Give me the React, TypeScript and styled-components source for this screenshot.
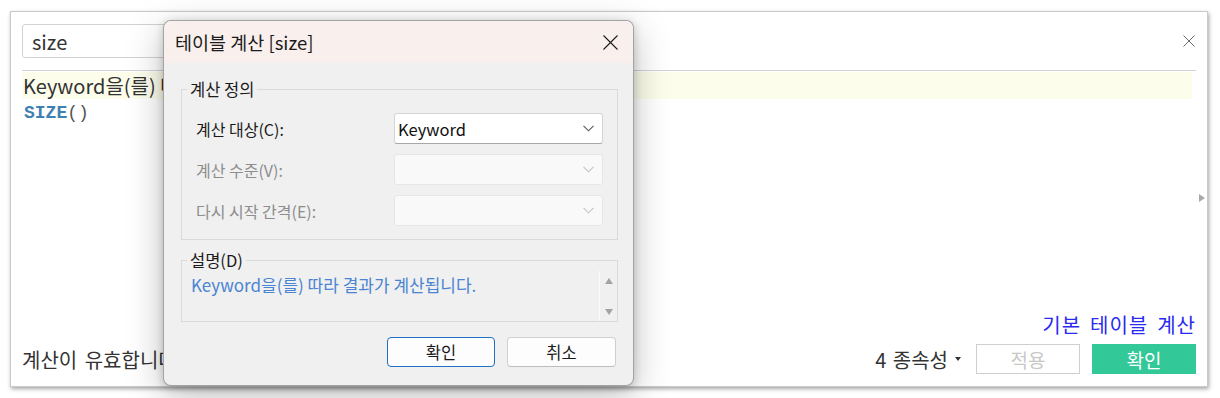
import React from "react";
import styled, { createGlobalStyle } from "styled-components";

const Global = createGlobalStyle`
  html, body { margin: 0; padding: 0; background: #ffffff; }
  body { font-family: "Noto Sans CJK KR", "Noto Sans", sans-serif; color: #333; }
  * { box-sizing: border-box; }
`;

const Stage = styled.div`
  position: relative;
  width: 1220px;
  height: 398px;
  padding: 11px 0 0 10px;
  overflow: hidden;
`;

const Panel = styled.section`
  position: relative;
  width: 1198px;
  height: 376px;
  background: #fff;
  border: 1px solid #c9c9c9;
  box-shadow: 1px 2px 4px rgba(0, 0, 0, 0.35);
  padding: 12px 11px 12px 11px;
  display: flex;
  flex-direction: column;
`;

const SearchRow = styled.div`
  height: 34px;
  display: flex;
  align-items: center;
  justify-content: space-between;
`;

const SearchBox = styled.div`
  width: 560px;
  height: 34px;
  border: 1px solid #d2d2d2;
  border-radius: 3px;
  padding-left: 9px;
  display: flex;
  align-items: center;
  font-size: 20px;
  color: #333;
`;

const PanelClose = styled.span`
  width: 12px;
  height: 12px;
  margin-right: 1px;
  display: flex;
`;

const Divider = styled.div`
  margin-top: 12px;
  height: 1px;
  background: #d3d3d3;
`;

const Highlight = styled.div`
  margin-top: 1px;
  margin-right: 4px;
  height: 27px;
  background: #fdfdec;
  font-size: 20px;
  line-height: 27px;
  color: #333;
  padding-left: 1px;
  white-space: nowrap;
`;

const Code = styled.div`
  margin-top: 4px;
  height: 20px;
  line-height: 20px;
  padding-left: 2px;
  font-family: "Liberation Mono", "DejaVu Sans Mono", monospace;
  font-size: 18px;
  color: #444;
`;

const Fn = styled.span`
  font-weight: bold;
  color: #3f80b3;
`;

const Paren = styled.span`
  color: #555;
`;

const Spacer = styled.div`
  flex: 1;
`;

const LinkRow = styled.div`
  text-align: right;
  margin-bottom: 6px;
  line-height: 24px;
`;

const Link = styled.a`
  font-size: 20px;
  letter-spacing: 1px;
  word-spacing: 3.5px;
  color: #2a2af0;
  text-decoration: none;
`;

const BottomRow = styled.div`
  height: 30px;
  display: flex;
  align-items: center;
  justify-content: space-between;
`;

const Status = styled.span`
  font-size: 20px;
  word-spacing: 3px;
  color: #333;
`;

const Actions = styled.div`
  display: flex;
  align-items: center;
`;

const Deps = styled.span`
  font-size: 20px;
  color: #333;
  display: flex;
  align-items: center;
  margin-right: 15px;
  word-spacing: 2px;
`;

const Caret = styled.span`
  margin-left: 7px;
  width: 0;
  height: 0;
  border-left: 3.5px solid transparent;
  border-right: 3.5px solid transparent;
  border-top: 4px solid #333;
`;

const PanelButton = styled.button<{ $primary?: boolean }>`
  width: 104px;
  height: 30px;
  margin-left: ${(p) => (p.$primary ? "12px" : "0")};
  border: 1px solid ${(p) => (p.$primary ? "#33c898" : "#cfcfcf")};
  background: ${(p) => (p.$primary ? "#33c898" : "#fff")};
  color: ${(p) => (p.$primary ? "#fff" : "#c8c8c8")};
  font-family: inherit;
  font-size: 19px;
  padding: 0;
  border-radius: 0;
`;

const Handle = styled.span`
  position: absolute;
  right: 2px;
  top: 182px;
  width: 0;
  height: 0;
  border-top: 4.5px solid transparent;
  border-bottom: 4.5px solid transparent;
  border-left: 6px solid #a9a9a9;
`;

/* ---------- dialog ---------- */

const Dialog = styled.div`
  position: absolute;
  left: 163px;
  top: 20px;
  width: 471px;
  height: 366px;
  border: 1px solid rgba(0, 0, 0, 0.32);
  border-radius: 8px;
  background: #f0f0f0;
  overflow: hidden;
  display: flex;
  flex-direction: column;
  box-shadow: 0 10px 36px rgba(0, 0, 0, 0.26), 0 2px 8px rgba(0, 0, 0, 0.18);
  color: #1a1a1a;
`;

const TitleBar = styled.div`
  height: 42px;
  flex: none;
  background: #f9efed;
  display: flex;
  align-items: center;
  justify-content: space-between;
  padding-left: 11px;
`;

const Title = styled.span`
  font-size: 18.5px;
  color: #1b1b1b;
`;

const TitleClose = styled.span`
  width: 46px;
  height: 42px;
  display: flex;
  align-items: center;
  justify-content: center;
`;

const DialogBody = styled.div`
  flex: 1;
  padding: 16px 15px 18px 17px;
  display: flex;
  flex-direction: column;
`;

const Group = styled.fieldset<{ $gap?: number }>`
  margin: ${(p) => p.$gap ?? 0}px 0 0 0;
  border: 1px solid #dadada;
  min-width: 0;
`;

const DefGroup = styled(Group)`
  padding: 14px 14px 13px 13px;
`;

const DescGroup = styled(Group)`
  padding: 0 0 0 9px;
`;

const Legend = styled.legend<{ $lh: number; $shift: number }>`
  margin-left: ${(p) => p.$shift}px;
  padding: 0 3px;
  font-size: 16.5px;
  line-height: ${(p) => p.$lh}px;
  color: #1a1a1a;
`;

const FormGrid = styled.div`
  display: grid;
  grid-template-columns: 1fr 209px;
  row-gap: 10px;
  align-items: center;
`;

const Label = styled.span<{ $disabled?: boolean }>`
  font-size: 16px;
  padding-left: 1px;
  color: ${(p) => (p.$disabled ? "#8d8d8d" : "#1a1a1a")};
`;

const Combo = styled.div<{ $disabled?: boolean }>`
  height: 31px;
  border: 1px solid ${(p) => (p.$disabled ? "#e6e6e6" : "#d4d4d4")};
  border-bottom-color: ${(p) => (p.$disabled ? "#e6e6e6" : "#a8a8a8")};
  border-radius: 3px;
  background: ${(p) => (p.$disabled ? "#f9f9f9" : "#ffffff")};
  display: flex;
  align-items: center;
  justify-content: space-between;
  padding: 0 8px 0 3px;
  font-size: 16.5px;
  color: #111;
`;

const DescRow = styled.div`
  height: 52px;
  display: flex;
`;

const DescText = styled.div`
  flex: 1;
  padding-top: 5px;
  font-size: 17px;
  line-height: 22px;
  color: #4a84d2;
`;

const ScrollBar = styled.div`
  width: 18px;
  margin-top: 2px;
  border-left: 1px solid #fbfbfb;
  display: flex;
  flex-direction: column;
  justify-content: space-between;
  align-items: center;
  padding: 7px 0 6px 0;
`;

const Arrow = styled.span<{ $down?: boolean }>`
  width: 0;
  height: 0;
  border-left: 4.5px solid transparent;
  border-right: 4.5px solid transparent;
  ${(p) =>
    p.$down ? "border-top: 6px solid #a3a3a3;" : "border-bottom: 6px solid #a3a3a3;"}
`;

const ButtonRow = styled.div`
  margin-top: 15px;
  margin-right: 2px;
  display: flex;
  justify-content: flex-end;
  gap: 12px;
`;

const DlgButton = styled.button<{ $default?: boolean; $w: number }>`
  width: ${(p) => p.$w}px;
  height: 30px;
  border: 1px solid ${(p) => (p.$default ? "#1f6fc5" : "#d0d0d0")};
  border-bottom-color: ${(p) => (p.$default ? "#1f6fc5" : "#bdbdbd")};
  border-radius: 4px;
  background: #fdfdfd;
  font-family: inherit;
  font-size: 16.5px;
  color: #1a1a1a;
  padding: 0;
`;

const Chevron = ({ color }: { color: string }) => (
  <svg width="11" height="7" viewBox="0 0 11 7">
    <polyline points="0.5,0.8 5.5,5.8 10.5,0.8" fill="none" stroke={color} strokeWidth="1.1" />
  </svg>
);

const XIcon = ({ size, color, w }: { size: number; color: string; w: number }) => (
  <svg width={size} height={size} viewBox={`0 0 ${size} ${size}`}>
    <line x1="0.5" y1="0.5" x2={size - 0.5} y2={size - 0.5} stroke={color} strokeWidth={w} />
    <line x1={size - 0.5} y1="0.5" x2="0.5" y2={size - 0.5} stroke={color} strokeWidth={w} />
  </svg>
);

const rows = [
  { label: "계산 대상(C):", value: "Keyword", disabled: false },
  { label: "계산 수준(V):", value: "", disabled: true },
  { label: "다시 시작 간격(E):", value: "", disabled: true },
];

export default function App() {
  return (
    <>
      <Global />
      <Stage>
        <Panel>
          <SearchRow>
            <SearchBox>size</SearchBox>
            <PanelClose>
              <XIcon size={12} color="#6a6a6a" w={1} />
            </PanelClose>
          </SearchRow>
          <Divider />
          <Highlight>Keyword을(를) 따라 결과가 계산됩니다.</Highlight>
          <Code>
            <Fn>SIZE</Fn>
            <Paren>()</Paren>
          </Code>
          <Spacer />
          <LinkRow>
            <Link>기본 테이블 계산</Link>
          </LinkRow>
          <BottomRow>
            <Status>계산이 유효합니다.</Status>
            <Actions>
              <Deps>
                4 종속성
                <Caret />
              </Deps>
              <PanelButton>적용</PanelButton>
              <PanelButton $primary>확인</PanelButton>
            </Actions>
          </BottomRow>
          <Handle />
        </Panel>

        <Dialog>
          <TitleBar>
            <Title>테이블 계산 [size]</Title>
            <TitleClose>
              <XIcon size={15} color="#1a1a1a" w={1.1} />
            </TitleClose>
          </TitleBar>
          <DialogBody>
            <DefGroup>
              <Legend $lh={20} $shift={-8}>계산 정의</Legend>
              <FormGrid>
                {rows.map((r) => (
                  <React.Fragment key={r.label}>
                    <Label $disabled={r.disabled}>{r.label}</Label>
                    <Combo $disabled={r.disabled}>
                      <span>{r.value}</span>
                      <Chevron color={r.disabled ? "#c4c4c4" : "#5a5a5a"} />
                    </Combo>
                  </React.Fragment>
                ))}
              </FormGrid>
            </DefGroup>
            <DescGroup $gap={11}>
              <Legend $lh={18} $shift={-4}>설명(D)</Legend>
              <DescRow>
                <DescText>Keyword을(를) 따라 결과가 계산됩니다.</DescText>
                <ScrollBar>
                  <Arrow />
                  <Arrow $down />
                </ScrollBar>
              </DescRow>
            </DescGroup>
            <ButtonRow>
              <DlgButton $default $w={108}>확인</DlgButton>
              <DlgButton $w={109}>취소</DlgButton>
            </ButtonRow>
          </DialogBody>
        </Dialog>
      </Stage>
    </>
  );
}
